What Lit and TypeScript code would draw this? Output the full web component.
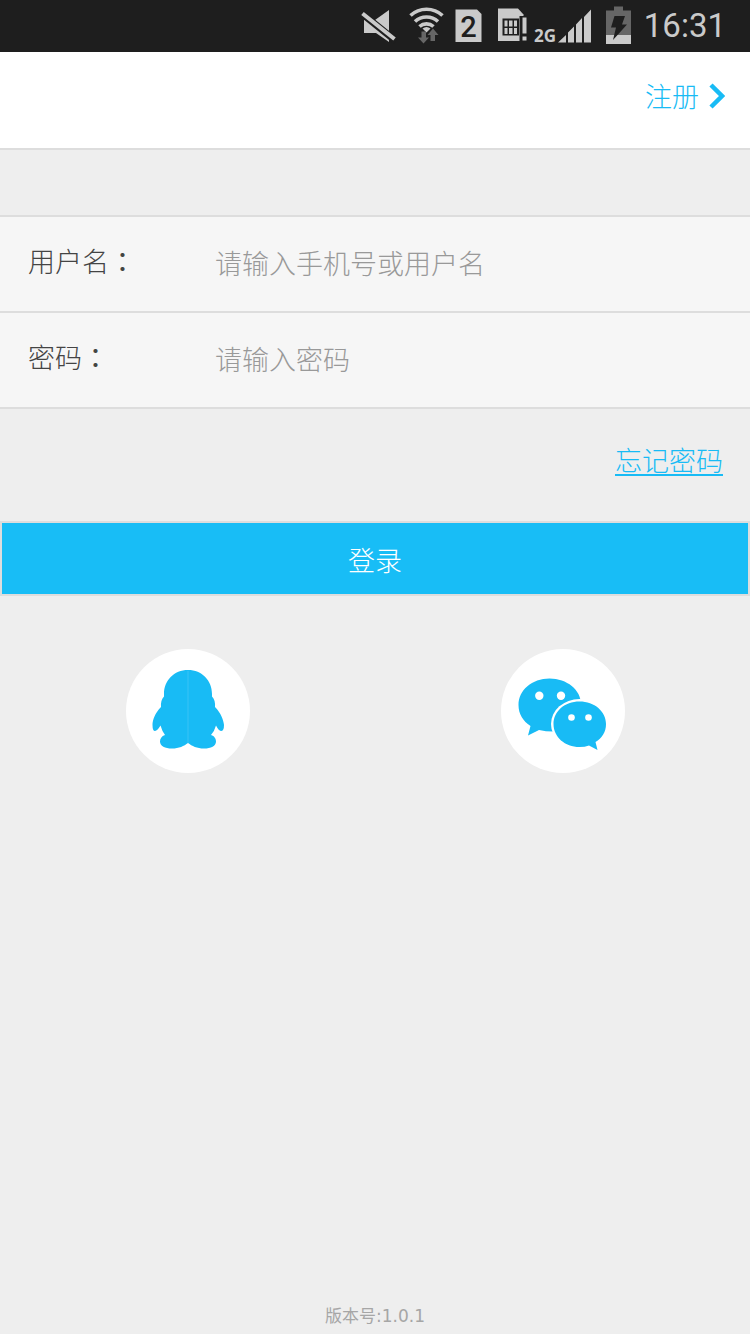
import { LitElement, html, css, svg } from "lit";
import { customElement, state } from "lit/decorators.js";

/* Device status bar: sound, network, SIM, battery and clock. */
@customElement("status-bar")
class StatusBar extends LitElement {
  static styles = css`
    :host {
      display: flex;
      justify-content: flex-end;
      align-items: center;
      height: 52px;
      padding-right: 24px;
      background: #1e1e1e;
      color: #cacaca;
      font-family: Roboto, sans-serif;
      font-weight: 400;
    }
    svg { display: block; fill: currentColor; }
    .time { font-size: 33px; line-height: 52px; margin-left: 10px; }
    .sim { font-family: Roboto, sans-serif; font-size: 29px; font-weight: 500; fill: #1e1e1e; }
    .net { font-family: "Open Sans", sans-serif; font-size: 17px; font-weight: 700; }
    .dim { fill: #666; }
    .dark { fill: #1e1e1e; }
    .arc { fill: none; stroke: currentColor; stroke-width: 3.6; }
    .slash { stroke: currentColor; stroke-width: 4; }
    .gap { stroke: #1e1e1e; stroke-width: 7; }
  `;
  render() {
    return html`
      <svg width="274" height="52" viewBox="360 0 274 52" aria-hidden="true">
        <path d="M364 20h11L389 10v32L376 33H364z" />
        <path class="gap" d="M360 12L396 41" />
        <path class="slash" d="M362.500 13.500L394.500 39" />

        <path class="arc" d="M410.500 15.500A23.500 23.500 0 0 1 442.500 15.500M415 21.500A17 17 0 0 1 438 21.500M419.500 26.500A10.500 10.500 0 0 1 433.500 26.500" />
        <path d="M422.500 28.500Q426.500 25.500 430.500 28.500L426.500 32.500z" />
        <path class="dim" d="M421.500 31.500h4.500v6h3l-5.500 6-5.500-6H421.500zM430.500 41v-6h-3l5.500-6.500 5.500 6.500H435v6z" />

        <path d="M455.500 9.500H477l4.500 4.500V42h-26z" />
        <text class="sim" x="468.500" y="37" text-anchor="middle">2</text>

        <path d="M498 8.500h20l5.500 6V41H498z" />
        <path class="dark" d="M502.500 18.500h16.500v17h-16.500zM519.500 16h9v26h-9z" />
        <path d="M504.500 20.500h3v6h-3zM504.500 28h3v6h-3zM509 20.500h3.500v6H509zM509 28h3.500v6H509zM514 20.500h3v6h-3zM514 28h3v6h-3z" />
        <path d="M522.500 17.500h4v16h-4zM522.500 36.500h4v4h-4z" />

        <text class="net" x="534" y="42">2G</text>
        <path d="M558 42.500l8-7.500v7.500zM568 42.500v-10l6-6v16zM576 42.500v-18l6-6.500v24.500zM584 42.500V17l7-7.500v33z" />

        <path class="dim" d="M606 10.500h8V6.500h9v4h8v25h-25z" />
        <path d="M606 35h25v9h-25z" />
        <path class="dark" d="M614.500 16h10.500l-3 8.500h5L613 40l3-12.500h-5z" />
      </svg>
      <span class="time">16:31</span>
    `;
  }
}

const qqIcon = svg`
  <circle cx="62" cy="62" r="62" fill="#fff" />
  <path fill="#18bbf5" d="M62 21C48 21 38 31.500 38 45V47.500Q34.500 51 35 58C29 64 26.500 71 26.500 76Q26.500 82 29 82Q31.500 81.500 34.500 76.500Q36 82 39 86C35.500 87 34 90 34 92.500C34 97 39 99.500 46 99.500C53 99.500 58 97 62 94C66 97 71 99.500 78 99.500C85 99.500 90 97 90 92.500C90 90 88.500 87 85 86Q88.500 82 90 76.500Q92.500 81.500 95 82Q98 82 98 76C97.500 71 95 64 89 58Q89.500 51 86 47.500V45C86 31.500 76 21 62 21Z" />
  <path stroke="#38c3f6" d="M62 22V94" />`;

const wechatIcon = svg`
  <circle cx="62" cy="62" r="62" fill="#fff" />
  <path fill="#18bbf5" d="M48.500 29.500C31 29.500 17.500 41 17.500 56C17.500 65 22 72 29.500 77L27 86.500L38 81Q45 82.500 52 82.500L80 55C80 41 66 29.500 48.500 29.500Z" />
  <ellipse cx="78.500" cy="75" rx="28.500" ry="25" fill="#fff" />
  <path fill="#18bbf5" d="M78.500 52.500C63.500 52.500 52.500 62.500 52.500 75C52.500 88 64 98 78.500 98Q84 98 88 96.500L96.500 101L94.500 93C101 89 105 83 105 75C105 62.500 93.500 52.500 78.500 52.500Z" />
  <g fill="#fff">
    <circle cx="38.300" cy="46.800" r="4.200" /><circle cx="60" cy="46.800" r="4.200" />
    <circle cx="70.500" cy="68.500" r="3.300" /><circle cx="87.500" cy="68.500" r="3.300" />
  </g>`;

@customElement("app-root")
class AppRoot extends LitElement {
  static styles = css`
    * { box-sizing: border-box; }
    :host {
      display: flex;
      flex-direction: column;
      min-height: 100vh;
      background: #eee;
      color: #444;
      font-family: "Noto Sans CJK SC", sans-serif;
      font-size: 27px;
      font-weight: 300;
      line-height: 40px;
    }
    a { color: #18bbf5; }
    .top {
      display: flex;
      justify-content: flex-end;
      height: 98px;
      padding: 24px 25px 0;
      background: #fff;
      border-bottom: 2px solid #ddd;
    }
    .register {
      display: flex;
      gap: 10px;
      height: 40px;
      text-decoration: none;
    }
    .chevron { width: 16px; height: 40px; }
    form { display: flex; flex-direction: column; margin-top: 65px; }
    .fields { border-top: 2px solid #ddd; }
    .row {
      display: grid;
      grid-template-columns: 187px 1fr;
      align-items: center;
      height: 96px;
      padding-left: 28px;
      background: #f6f6f6;
      border-bottom: 2px solid #ddd;
    }
    label { padding-bottom: 6px; }
    .colon { font-family: "Noto Sans CJK TC", sans-serif; font-weight: 400; }
    input {
      width: 100%;
      height: 92px;
      padding: 0 0 4px;
      border: 0;
      outline: 0;
      background: none;
      color: #444;
      font: inherit;
    }
    input::placeholder { color: #999; opacity: 1; }
    .forgot {
      align-self: flex-end;
      margin: 31px 27px 0 0;
      text-underline-offset: 3px;
      text-decoration-thickness: 2px;
    }
    .login {
      height: 75px;
      margin-top: 41px;
      padding: 2px 0 0;
      border: 2px solid #ddd;
      background: #18bdf6;
      color: #fff;
      font: inherit;
    }
    .social {
      display: grid;
      grid-template-columns: 1fr 1fr;
      justify-items: center;
      margin-top: 53px;
    }
    .social button {
      padding: 0;
      border: 0;
      border-radius: 50%;
      background: none;
    }
    .social svg { display: block; width: 124px; height: 124px; }
    footer {
      margin-top: auto;
      padding-bottom: 6px;
      text-align: center;
      color: #a6a6a6;
      font-family: "DejaVu Sans", "Noto Sans CJK SC", sans-serif;
      font-size: 17px;
      font-weight: 400;
      line-height: 24px;
    }
  `;

  @state() private user = "";
  @state() private password = "";

  private field(id: string, label: string, hint: string, type: string, set: (v: string) => void, value: string) {
    return html`
      <div class="row">
        <label for=${id}>${label}<span class="colon" lang="zh-Hant">：</span></label>
        <input id=${id} type=${type} placeholder=${hint} .value=${value}
          @input=${(e: Event) => set((e.target as HTMLInputElement).value)} />
      </div>`;
  }

  render() {
    return html`
      <status-bar></status-bar>
      <header class="top">
        <a class="register" href="#register">注册<svg class="chevron" viewBox="0 0 16 40" aria-hidden="true">
          <path d="M2 9L13 20L2 31" fill="none" stroke="#18bbf5" stroke-width="4.500" />
        </svg></a>
      </header>
      <form @submit=${(e: Event) => e.preventDefault()}>
        <div class="fields">
          ${this.field("user", "用户名", "请输入手机号或用户名", "text", (v) => (this.user = v), this.user)}
          ${this.field("password", "密码", "请输入密码", "password", (v) => (this.password = v), this.password)}
        </div>
        <a class="forgot" href="#forgot">忘记密码</a>
        <button class="login" type="submit">登录</button>
      </form>
      <div class="social">
        <button type="button" aria-label="QQ"><svg viewBox="0 0 124 124">${qqIcon}</svg></button>
        <button type="button" aria-label="微信"><svg viewBox="0 0 124 124">${wechatIcon}</svg></button>
      </div>
      <footer>版本号:1.0.1</footer>
    `;
  }
}
